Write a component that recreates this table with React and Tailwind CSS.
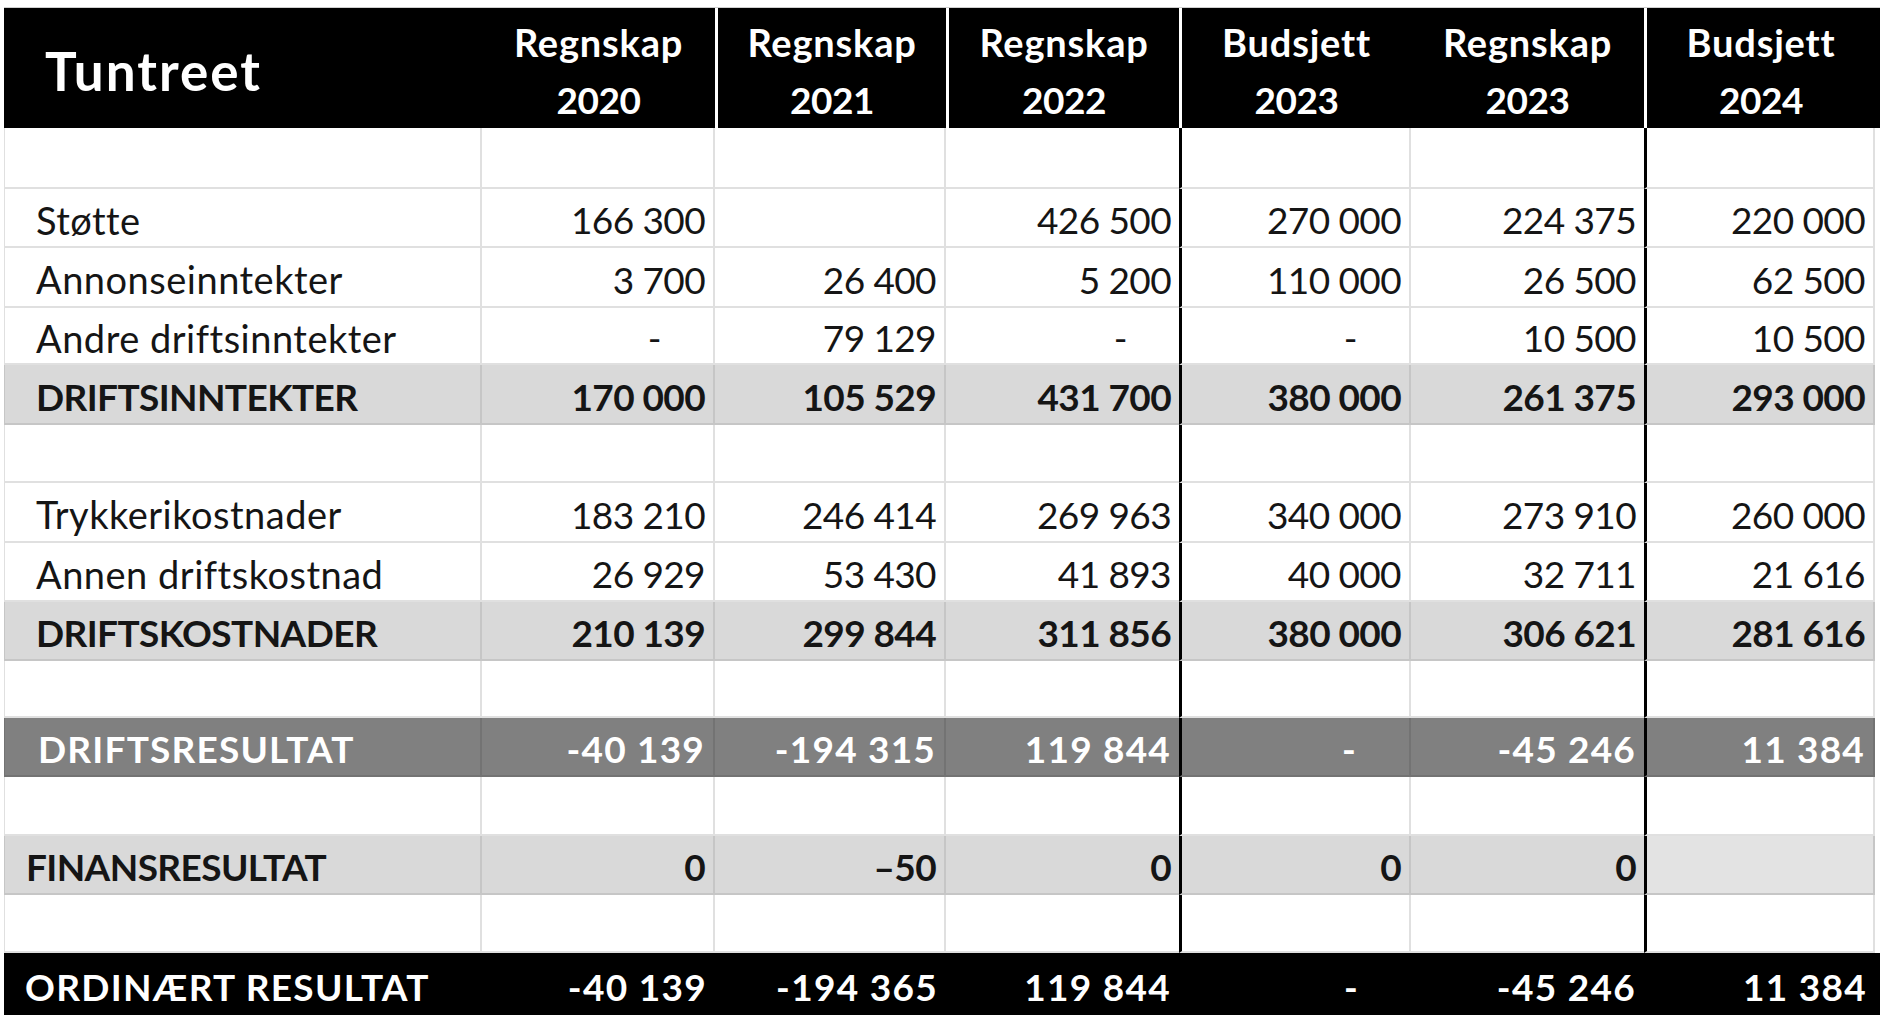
import React from "react";

const COLS = "grid grid-cols-[478px_233px_231px_233px_232px_233px_231px]";

const rows = [
  { t: "empty", h: "h-[61px]" },
  { t: "normal", h: "h-[59px]", label: "Støtte", v: ["166 300", "", "426 500", "270 000", "224 375", "220 000"] },
  { t: "normal", h: "h-[60px]", label: "Annonseinntekter", v: ["3 700", "26 400", "5 200", "110 000", "26 500", "62 500"] },
  { t: "normal", h: "h-[57px]", label: "Andre driftsinntekter", v: ["-", "79 129", "-", "-", "10 500", "10 500"] },
  { t: "sum", h: "h-[60px]", label: "DRIFTSINNTEKTER", v: ["170 000", "105 529", "431 700", "380 000", "261 375", "293 000"] },
  { t: "empty", h: "h-[58px]" },
  { t: "normal", h: "h-[60px]", label: "Trykkerikostnader", v: ["183 210", "246 414", "269 963", "340 000", "273 910", "260 000"] },
  { t: "normal", h: "h-[59px]", label: "Annen driftskostnad", v: ["26 929", "53 430", "41 893", "40 000", "32 711", "21 616"] },
  { t: "sum", h: "h-[59px]", label: "DRIFTSKOSTNADER", v: ["210 139", "299 844", "311 856", "380 000", "306 621", "281 616"] },
  { t: "empty", h: "h-[57px]" },
  { t: "dark", h: "h-[59px]", label: "DRIFTSRESULTAT", v: ["-40 139", "-194 315", "119 844", "-", "-45 246", "11 384"] },
  { t: "empty", h: "h-[59px]" },
  { t: "fin", h: "h-[59px]", label: "FINANSRESULTAT", v: ["0", "–50", "0", "0", "0", ""] },
  { t: "empty", h: "h-[58px]" },
];

const finalRow = { label: "ORDINÆRT RESULTAT", v: ["-40 139", "-194 365", "119 844", "-", "-45 246", "11 384"] };

function rowBg(t) {
  if (t === "sum" || t === "fin") return "bg-[#d9d9d9]";
  if (t === "dark") return "bg-[#808080]";
  return "bg-white";
}

function sepColor(t) {
  if (t === "sum" || t === "fin") return "border-[#c6c6c6]";
  if (t === "dark") return "border-[#737373]";
  return "border-[#e0e0e0]";
}

function textStyle(t, idx) {
  if (t === "dark") return "text-white font-bold text-[37px] tracking-[1.2px]";
  if (t === "sum" || t === "fin") return "text-[#151515] font-bold text-[37px] tracking-[-0.6px]";
  if (idx === 0) return "text-[#151515] font-normal text-[38px] tracking-[0.5px]";
  return "text-[#151515] font-normal text-[37px] tracking-[-0.6px]";
}

function Cell({ row, idx, children }) {
  const t = row.t;
  let border = "";
  if (idx === 4 || idx === 6) border += " border-l-[3px] border-l-black";
  if (idx !== 3 && idx !== 5) border += " border-r-2";
  if (idx === 0) border += " border-l";
  const bg = t === "fin" && idx === 6 ? "bg-[#e3e3e3]" : rowBg(t);
  const pad =
    idx === 0
      ? t === "fin"
        ? "pl-[21px]"
        : t === "dark"
        ? "pl-[33px]"
        : "pl-[31px]"
      : children === "-"
      ? "justify-end pr-[52px]"
      : "justify-end pr-[8px]";
  return (
    <div
      className={`flex items-center ${row.h} pt-[5px] border-b-2 ${sepColor(t)} ${border} ${bg} ${textStyle(
        t,
        idx
      )} ${pad} whitespace-nowrap`}
    >
      {children}
    </div>
  );
}

export default function App() {
  const headers = [
    ["Regnskap", "2020"],
    ["Regnskap", "2021"],
    ["Regnskap", "2022"],
    ["Budsjett", "2023"],
    ["Regnskap", "2023"],
    ["Budsjett", "2024"],
  ];
  return (
    <div
      className="w-[1880px] h-[1028px] bg-white pt-[7px] pl-[4px] overflow-hidden"
      style={{ fontFamily: "Lato, 'Open Sans', sans-serif" }}
    >
      {/* header */}
      <div className={`${COLS} h-[121px] bg-black border-t border-[#cfcfcf]`}>
        <div className="flex items-center pl-[41px] pt-[6px] text-white font-bold text-[53px] tracking-[2px]">
          Tuntreet
        </div>
        {headers.map((h, i) => {
          const sep = i === 1 || i === 2 || i === 3 || i === 5;
          return (
            <div
              key={i}
              className={`flex flex-col items-center justify-center text-white font-bold leading-[57px] pt-[5px] ${
                sep ? "border-l-[3px] border-white" : ""
              }`}
            >
              <span className="text-[38px] tracking-[0.8px]">{h[0]}</span>
              <span className="text-[37px] tracking-[-0.4px]">{h[1]}</span>
            </div>
          );
        })}
      </div>
      {rows.map((r, ri) => (
        <div key={ri} className={COLS}>
          <Cell row={r} idx={0}>{r.label || ""}</Cell>
          {(r.v || ["", "", "", "", "", ""]).map((v, i) => (
            <Cell key={i} row={r} idx={i + 1}>
              {v}
            </Cell>
          ))}
        </div>
      ))}
      <div className={`${COLS} bg-black h-[62px] text-white font-bold text-[37px] tracking-[1.3px]`}>
        <div className="flex items-center pl-[21px] pt-[5px] whitespace-nowrap">{finalRow.label}</div>
        {finalRow.v.map((v, i) => (
          <div
            key={i}
            className={`flex items-center justify-end pt-[5px] whitespace-nowrap ${v === "-" ? "pr-[52px]" : "pr-[8px]"}`}
          >
            {v}
          </div>
        ))}
      </div>
    </div>
  );
}
